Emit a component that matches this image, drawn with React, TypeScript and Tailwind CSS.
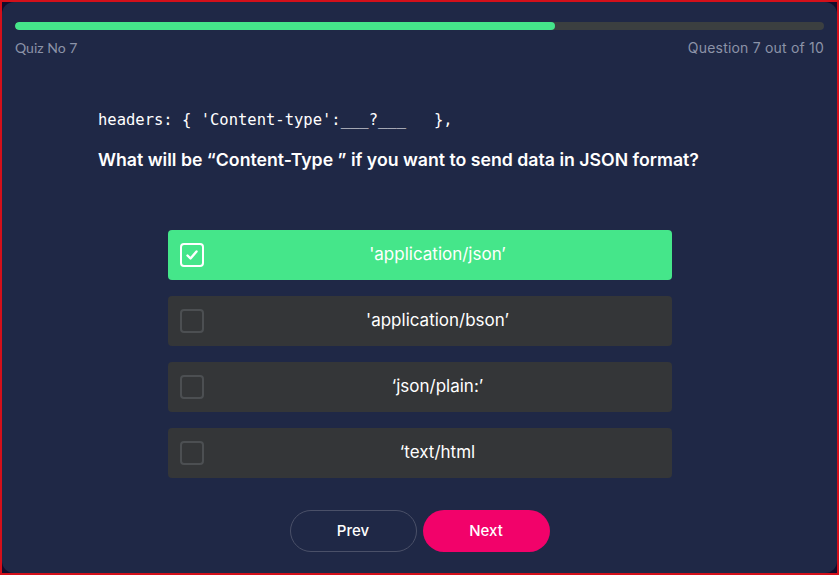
import React from 'react';

const options = [
  { label: "'application/json’", checked: true },
  { label: "'application/bson’", checked: false },
  { label: '‘json/plain:’', checked: false },
  { label: '‘text/html', checked: false },
];

const App: React.FC = () => {
  return (
    <div className="h-[575px] w-full bg-[#120c2c] border-2 border-[#d3101a]">
      <div className="h-full rounded-[12px] bg-[#1f2846] px-[13px] pt-[20px] font-['Inter',sans-serif]">
        {/* Progress */}
        <div className="h-[8px] w-full rounded-full bg-[#3b3f40] overflow-hidden">
          <div className="h-full w-[66.8%] rounded-full bg-[#45e58a]" />
        </div>
        <div className="mt-[7px] flex items-center justify-between text-[14px] text-[#8c93a8]">
          <span className="font-['Lato',sans-serif]">Quiz No 7</span>
          <span className="tracking-[0.2px]">Question 7 out of 10</span>
        </div>

        {/* Question */}
        <div className="mt-[51px] pl-[83px]">
          <pre className="font-['DejaVu_Sans_Mono',monospace] text-[15.5px] text-white">
            headers: {'{'} 'Content-type':___?___   {'}'},
          </pre>
          <h2 className="mt-[15px] text-[17.7px] font-semibold text-white">
            What will be “Content-Type ” if you want to send data in JSON format?
          </h2>
        </div>

        {/* Options */}
        <div className="mx-auto mt-[56px] flex w-[504px] flex-col gap-[16px]">
          {options.map((opt, i) => (
            <div
              key={i}
              className={`flex h-[50px] items-center rounded-[4px] pl-[12px] ${
                opt.checked ? 'bg-[#45e68a]' : 'bg-[#343638]'
              }`}
            >
              <div
                className={`flex h-[24px] w-[24px] shrink-0 items-center justify-center rounded-[4px] border-[2.5px] ${
                  opt.checked ? 'border-white' : 'border-[#4c4f52]'
                }`}
              >
                {opt.checked && (
                  <svg width="14" height="14" viewBox="0 0 14 14" fill="none">
                    <path d="M2.5 7.5 L5.5 10.5 L11.5 3.5" stroke="white" strokeWidth="2.4" strokeLinecap="round" strokeLinejoin="round" />
                  </svg>
                )}
              </div>
              <span className="flex-1 text-center text-[17px] text-white">{opt.label}</span>
            </div>
          ))}
        </div>

        {/* Buttons */}
        <div className="mt-[32px] flex justify-center gap-[6px]">
          <button className="h-[42px] w-[127px] rounded-full border border-[#4a5068] text-[15px] font-medium text-white">
            Prev
          </button>
          <button className="h-[42px] w-[127px] rounded-full bg-[#f2026a] text-[15px] font-medium text-white">
            Next
          </button>
        </div>
      </div>
    </div>
  );
};

export default App;
